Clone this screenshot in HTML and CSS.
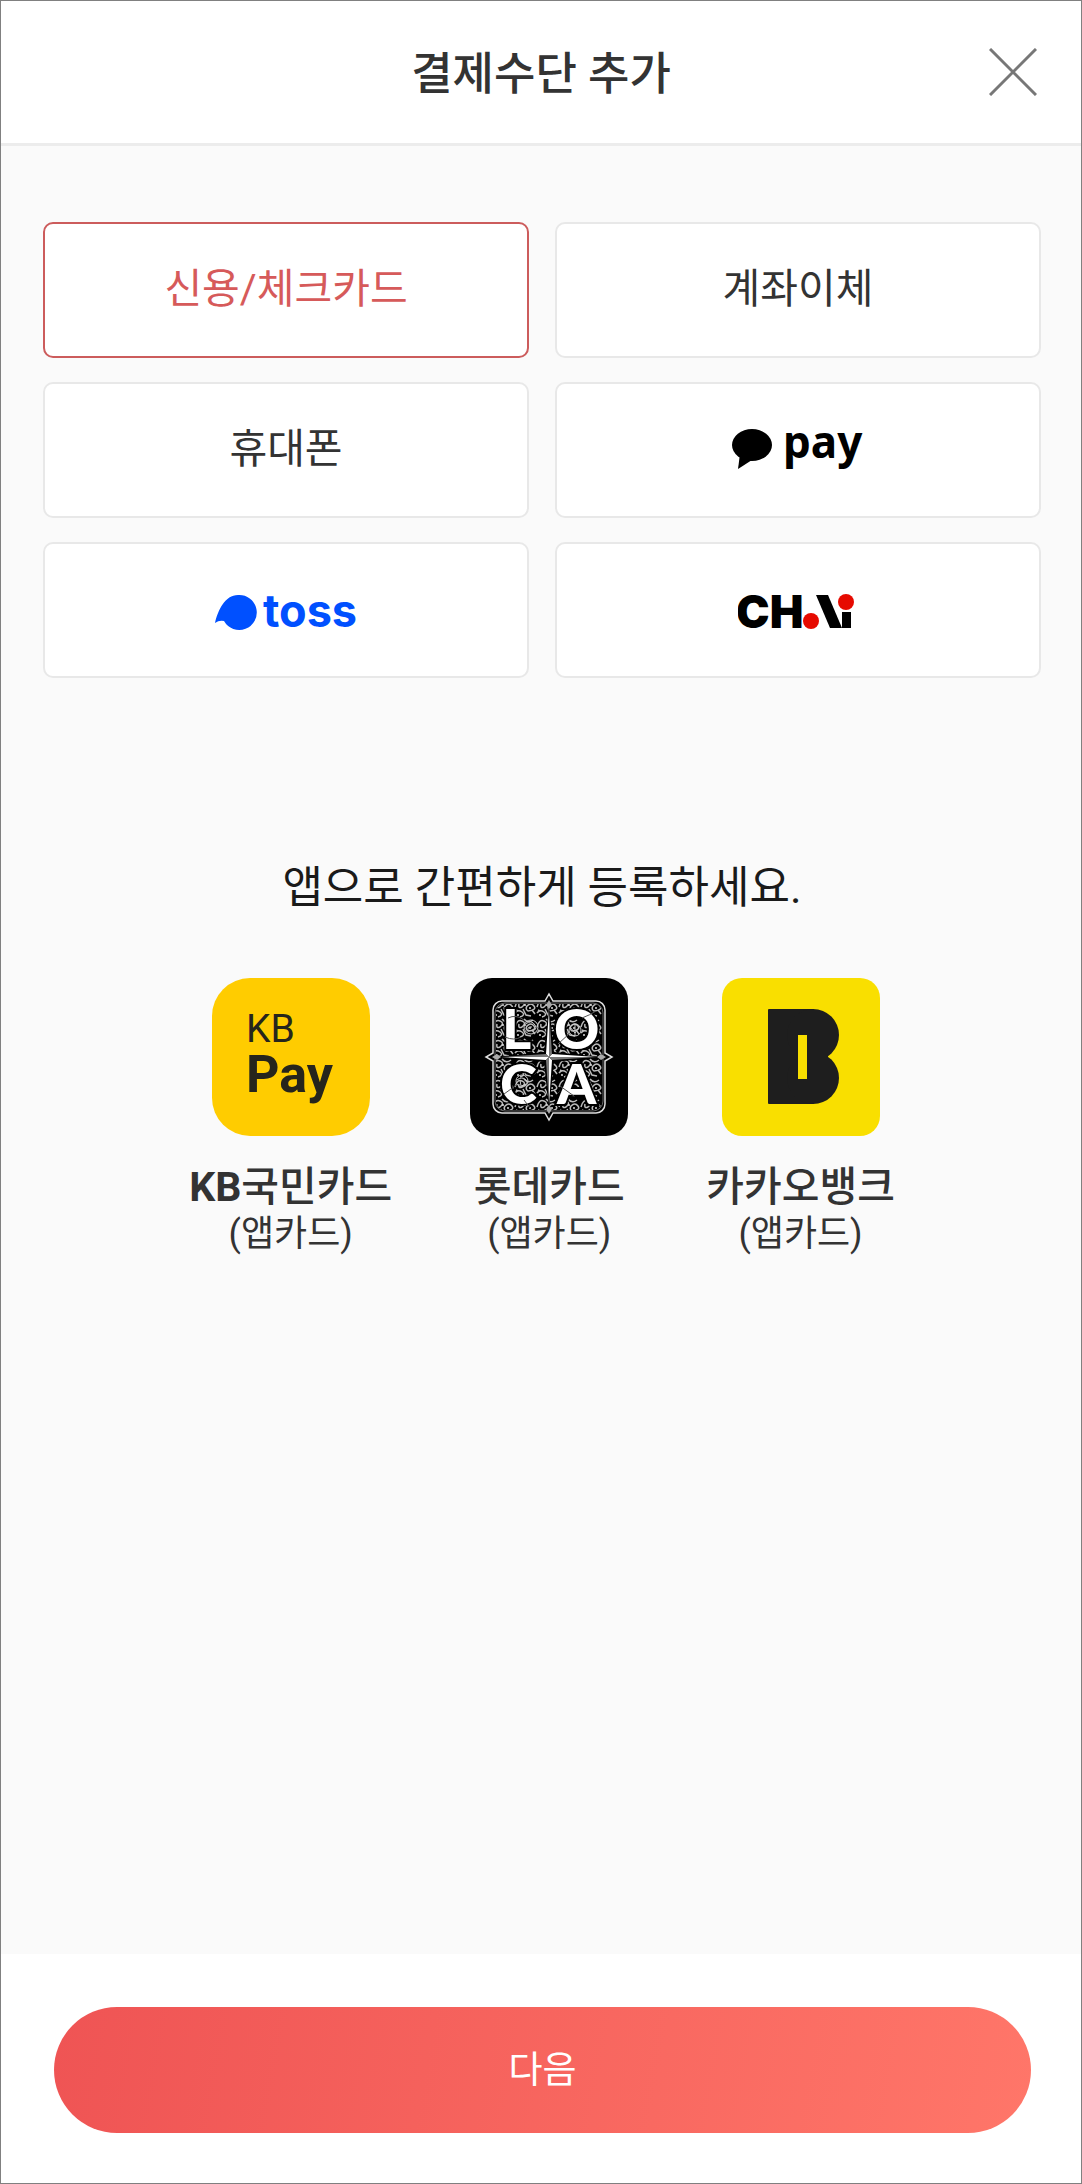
FILE: index.html
```html
<!DOCTYPE html>
<html lang="ko">
<head>
    <meta charset="utf-8">
    <meta name="viewport" content="width=device-width, initial-scale=1">
    <title>결제수단 추가</title>
    <link rel="stylesheet" href="styles.css">
</head>
<body>
    <header class="header">
        <h1>결제수단 추가</h1>
        <button type="button" class="close" aria-label="닫기">
            <svg width="48" height="48" viewBox="0 0 48 48">
                <path d="M1 1L47 47M47 1L1 47" stroke="#777" stroke-width="3"/>
            </svg>
        </button>
    </header>

    <main class="content">
        <div class="methods">
            <button type="button" class="method selected" aria-pressed="true">신용/체크카드</button>
            <button type="button" class="method">계좌이체</button>
            <button type="button" class="method">휴대폰</button>
            <button type="button" class="method logo" aria-label="카카오페이">
                <svg width="152" height="76" viewBox="-8 -9 152 76">
                    <ellipse cx="22" cy="22" rx="20" ry="16"/>
                    <path d="M10 31L8 46L22 37Z"/>
                    <text class="logo-kakao" x="53" y="35">pay</text>
                </svg>
            </button>
            <button type="button" class="method logo" aria-label="토스">
                <svg width="156" height="76" viewBox="-5 -10 156 76" fill="#0050ff">
                    <path d="M2 39C5 26 12 11 25 11A17.500 17.500 0 1 1 11 37Q6 36 2 39Z"/>
                    <text class="logo-toss" x="50" y="43">toss</text>
                </svg>
            </button>
            <button type="button" class="method logo" aria-label="차이">
                <svg width="120" height="76" viewBox="2 -11 120 76">
                    <text class="logo-chai" x="0" y="43">CH</text>
                    <path d="M80 10H92L106 43H94Z"/>
                    <rect x="106" y="27" width="9" height="16"/>
                    <circle cx="75" cy="36" r="8" fill="#e60a00"/>
                    <circle cx="110" cy="17" r="8" fill="#e60a00"/>
                </svg>
            </button>
        </div>

        <h2>앱으로 간편하게 등록하세요.</h2>

        <div class="apps">
            <button type="button" class="app">
                <svg width="158" height="158" viewBox="0 0 158 158">
                    <rect width="158" height="158" rx="38" fill="#ffcc00"/>
                    <g fill="#26251c">
                        <text class="logo-kb" x="34" y="64">KB</text>
                        <text class="logo-kbpay" x="34" y="114">Pay</text>
                    </g>
                </svg>
                <strong><b>KB</b>국민카드</strong>
                <span>(앱카드)</span>
            </button>
            <button type="button" class="app">
                <svg width="158" height="158" viewBox="0 0 158 158">
                    <defs>
                        <pattern id="vine" width="22" height="20" patternUnits="userSpaceOnUse">
                            <g fill="none" stroke="#bbb" stroke-width="1.500">
                                <path d="M1 9Q3 1 8 3T8 9Q4 11 5 6M10 1Q14 6 19 2M13 8Q17 4 20 8T14 13Q11 11 13 8"/>
                                <path d="M1 15Q4 11 8 14T6 19M9 11L12 17L17 18M18 12L21 16M2 12L4 13"/>
                            </g>
                            <g fill="#ddd">
                                <circle cx="11" cy="7" r="1"/>
                                <circle cx="16" cy="10" r="1"/>
                                <circle cx="4" cy="17" r="1"/>
                            </g>
                        </pattern>
                    </defs>
                    <rect width="158" height="158" rx="22"/>
                    <rect x="26" y="26" width="106" height="106" rx="8" fill="url(#vine)"/>
                    <g class="logo-loca">
                        <text x="32" y="71">L</text>
                        <text x="84" y="71">O</text>
                        <text x="30" y="126">C</text>
                        <text x="87" y="126">A</text>
                    </g>
                    <g fill="none" stroke="#ccc" stroke-width="1">
                        <path d="M38 40Q46 36 54 42M35 59Q44 63 51 59M112 40Q120 37 126 33M88 66L100 55M34 116L48 106M54 122L60 130M90 108L104 118" stroke="#555"/>
                        <circle cx="61" cy="49" r="7"/>
                        <path d="M56 46Q61 41 65 47T58 53Q57 48 62 49"/>
                        <circle cx="105" cy="52" r="6"/>
                        <path d="M100 49L105 55L110 48M105 46V58"/>
                        <circle cx="52" cy="103" r="6"/>
                        <path d="M47 102Q52 98 56 102T51 108L50 102"/>
                    </g>
                    <rect x="25" y="25" width="108" height="108" rx="10" fill="none" stroke="#666"/>
                    <path d="M75 23L79 16L83 23H126A9 9 0 0 1 135 32V75L142 79L135 83V126A9 9 0 0 1 126 135H83L79 142L75 135H32A9 9 0 0 1 23 126V83L16 79L23 75V32A9 9 0 0 1 32 23Z" fill="none" stroke="#ddd" stroke-width="1.500"/>
                    <path d="M79 26L84 74L132 79L84 84L79 132L74 84L26 79L74 74Z" fill="#000"/>
                    <path d="M79 31V79L76 76ZM127 79H79L82 76ZM79 127V79L82 82ZM31 79H79L76 82Z" fill="#fff"/>
                    <path d="M79 31V79L82 76ZM127 79H79L82 82ZM79 127V79L76 82ZM31 79H79L76 76Z" fill="#777"/>
                    <path d="M79 22L82 27L79 31L76 27ZM136 79L131 82L127 79L131 76ZM79 136L76 131L79 127L82 131ZM22 79L27 76L31 79L27 82Z" fill="#aaa"/>
                </svg>
                <strong>롯데카드</strong>
                <span>(앱카드)</span>
            </button>
            <button type="button" class="app">
                <svg width="158" height="158" viewBox="0 0 158 158">
                    <rect width="158" height="158" rx="20" fill="#f9df00"/>
                    <g fill="#1e1e1e">
                        <rect x="46" y="31" width="46" height="95" rx="1"/>
                        <circle cx="91" cy="57" r="26"/>
                        <circle cx="91" cy="100" r="26"/>
                        <rect x="85" y="57" width="21" height="43"/>
                    </g>
                    <rect x="76" y="57" width="9" height="44" fill="#f9df00"/>
                </svg>
                <strong>카카오뱅크</strong>
                <span>(앱카드)</span>
            </button>
        </div>
    </main>

    <footer class="footer">
        <button type="button" class="next">다음</button>
    </footer>
</body>
</html>
```

FILE: styles.css
```css
* {
    box-sizing: border-box;
}
body {
    display: flex;
    flex-direction: column;
    min-height: 100vh;
    margin: 0;
    border: 1px solid #808080;
    background-color: #fafafa;
    color: #333333;
    font-family: Roboto, "Noto Sans CJK KR", sans-serif;
}
button {
    padding: 0;
    border: none;
    background: none;
    color: inherit;
    font-family: inherit;
    cursor: pointer;
}
svg {
    display: block;
}
.header {
    display: grid;
    grid-template-columns: 48px 1fr 48px;
    align-items: center;
    height: 145px;
    padding: 0 44px;
    border-bottom: 3px solid #ececec;
    background-color: #ffffff;
}
h1 {
    grid-column: 2;
    margin: 0;
    padding-top: 6px;
    font-size: 45px;
    font-weight: 500;
    line-height: 60px;
    text-align: center;
}
.content {
    flex: 1;
    padding: 76px 40px 76px 42px;
}
.methods {
    display: grid;
    grid-template-columns: 1fr 1fr;
    gap: 24px 26px;
}
.method {
    display: flex;
    align-items: center;
    justify-content: center;
    height: 136px;
    padding-bottom: 10px;
    border: 2px solid #e8e8e8;
    border-radius: 10px;
    background-color: #ffffff;
    font-size: 41px;
}
.method.selected {
    border-color: #cc5c5c;
    color: #d65a5a;
}
.method.logo {
    padding: 4px 0 0;
}
h2 {
    margin: 178px 0 58px;
    color: #1a1a1a;
    font-size: 44px;
    font-weight: 400;
    line-height: 64px;
    text-align: center;
}
.apps {
    display: flex;
    justify-content: center;
    gap: 78px;
}
.app {
    display: flex;
    flex-direction: column;
    align-items: center;
}
.app strong {
    margin-top: 26px;
    font-size: 41px;
    font-weight: 500;
    line-height: 50px;
}
.app b {
    font-weight: 700;
}
.app span {
    font-size: 36px;
    line-height: 44px;
}
.footer {
    padding: 53px 50px 50px 53px;
    background-color: #ffffff;
}
.next {
    width: 100%;
    height: 126px;
    padding-bottom: 6px;
    border-radius: 63px;
    background: linear-gradient(100deg, #ef5454, #ff7669);
    color: #ffffff;
    font-size: 37px;
}

/* logo lettering */
.logo-kakao {
    font: bold 44px "Noto Sans", sans-serif;
}
.logo-toss {
    font: bold 45px Inter, sans-serif;
}
.logo-chai {
    font: 900 45px Inter, sans-serif;
}
.logo-kb {
    font: 39px Roboto, sans-serif;
}
.logo-kbpay {
    font: bold 52px Roboto, sans-serif;
}
.logo-loca {
    fill: #ffffff;
    stroke: #000000;
    stroke-width: 4px;
    paint-order: stroke;
    font: 900 56px Lato, sans-serif;
}
```
